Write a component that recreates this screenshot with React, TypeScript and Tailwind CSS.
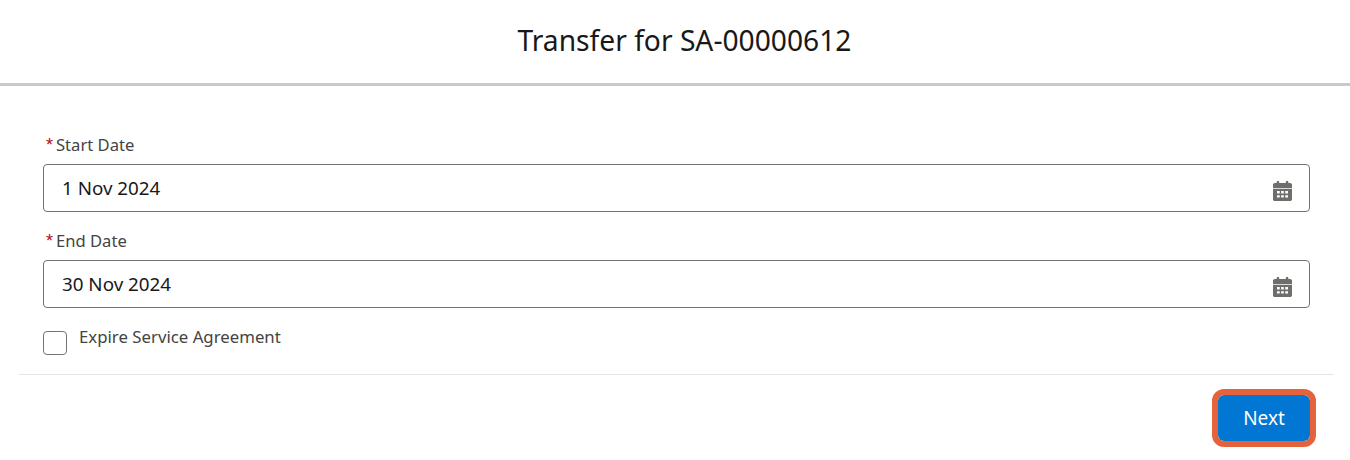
import React from "react";

function Cal() {
  return (
    <svg width="19" height="20" viewBox="0 0 20 20" preserveAspectRatio="none" className="absolute right-[17px] top-[16px]">
      <path fill="#706e6b" d="M4.6 0h1.2c.4 0 .7.3.7.7V2h7V.7c0-.4.3-.7.7-.7h1.2c.4 0 .7.3.7.7V2h2c1 0 1.9.8 1.9 1.8V7H0V3.8C0 2.8.9 2 1.9 2h2V.7c0-.4.3-.7.7-.7z" />
      <path fill="#706e6b" fillRule="evenodd" d="M0 7.8h20v10.4c0 1-.9 1.8-1.9 1.8H1.9C.9 20 0 19.2 0 18.2V7.8zM4.2 10v2.4h2.9V10H4.2zm4.4 0v2.4h2.8V10H8.6zm4.3 0v2.4h2.9V10h-2.9zM4.2 14.2v2.4h2.9v-2.4H4.2zm4.4 0v2.4h2.8v-2.4H8.6zm4.3 0v2.4h2.9v-2.4h-2.9z" />
    </svg>
  );
}

function DateField({ label, value }: { label: string; value: string }) {
  return (
    <div className="mb-[17px]">
      <div className="h-[24px] pl-[3px] text-[16.6px] leading-[24px] text-[#444444] flex">
        <span className="text-[#ba0517] w-[10px] text-[18px] font-['Liberation_Sans',sans-serif]">*</span>
        <span>{label}</span>
      </div>
      <div className="relative mt-[7px] h-[48px] rounded-[4px] border border-[#747474] bg-white pl-[18px] text-[18.8px] leading-[46px] text-[#181818]">
        {value}
        <Cal />
      </div>
    </div>
  );
}

export default function App() {
  return (
    <div className="w-[1350px] h-[460px] bg-white overflow-hidden font-['Noto_Sans',sans-serif]">
      <header className="h-[86px] border-b-[3px] border-[#c9c9c9] flex items-center justify-center pb-[3px] pl-[19px]">
        <h1 className="text-[28.2px] text-[#181818] font-normal">Transfer for SA-00000612</h1>
      </header>
      <main className="pl-[43px] pt-[47px] pr-[40px]">
        <DateField label="Start Date" value="1 Nov 2024" />
        <DateField label="End Date" value="30 Nov 2024" />
        <label className="mt-[23px] flex items-start">
          <span className="block w-[24px] h-[24px] rounded-[4px] border border-[#747474] bg-white" />
          <span className="ml-[12px] text-[16.8px] leading-[24px] text-[#444444] -mt-[6px]">Expire Service Agreement</span>
        </label>
      </main>
      <div className="ml-[19px] mr-[16px] mt-[19px] border-t border-[#e5e5e5] flex justify-end pr-[24px] pt-[20px]">
        <button className="w-[92px] h-[46px] rounded-[6px] bg-[#0176d3] text-white text-[19px] outline-[6px] outline-[#e4623c]">Next</button>
      </div>
    </div>
  );
}
